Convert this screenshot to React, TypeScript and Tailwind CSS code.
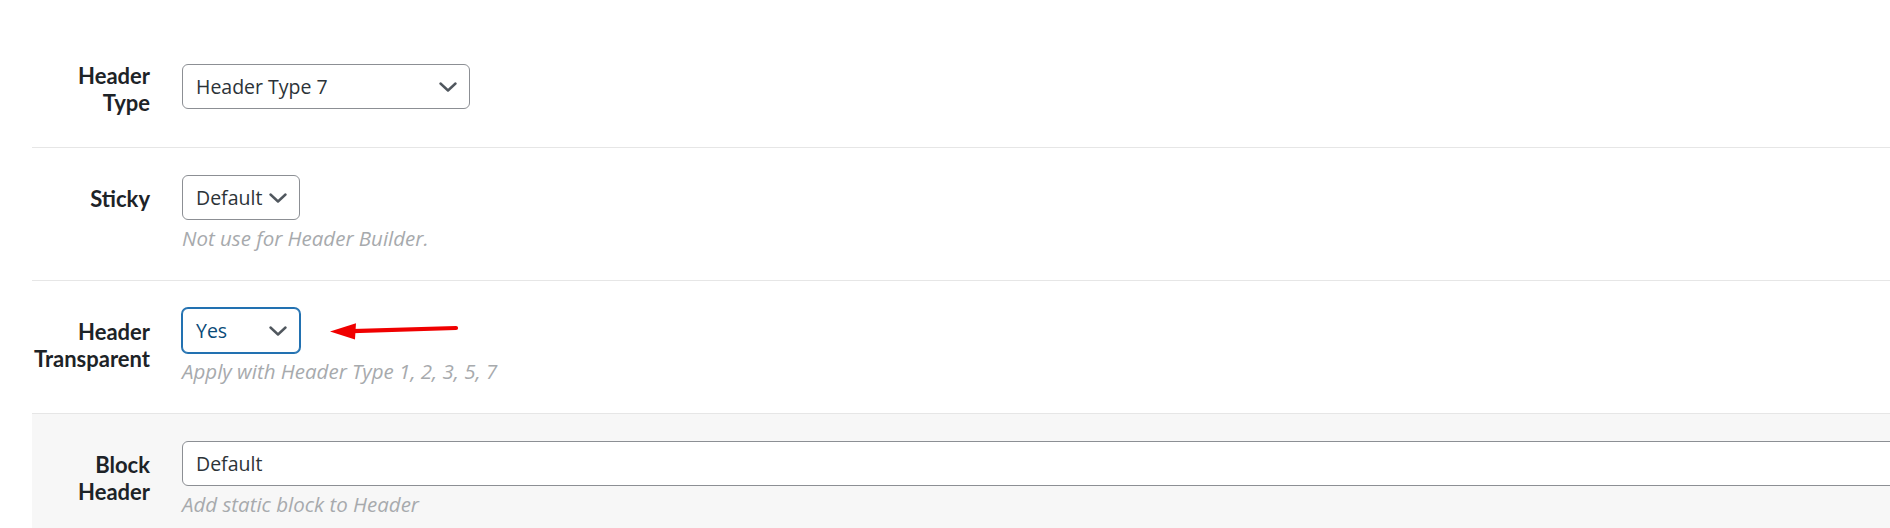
import React from "react";

function Chevron() {
  return (
    <svg width="18" height="10" viewBox="0 0 18 10" fill="none" className="shrink-0">
      <path d="M1.5 1.5 L9 8.5 L16.5 1.5" stroke="#50575e" strokeWidth="2.4" strokeLinecap="round" strokeLinejoin="round" />
    </svg>
  );
}

function Select({
  value,
  width,
  focused,
  chevron = true,
}: {
  value: string;
  width: string;
  focused?: boolean;
  chevron?: boolean;
}) {
  return (
    <div
      className={`${width} h-[45px] flex items-center justify-between rounded-[6px] pl-[13px] pr-[12px] text-[19.5px] bg-white font-['Open_Sans',sans-serif] ${
        focused
          ? "border border-[#2271b1] ring-1 ring-[#2271b1] text-[#0a4b78]"
          : "border border-[#8c8f94] text-[#2c3338]"
      }`}
    >
      <span className="leading-none">{value}</span>
      {chevron && <Chevron />}
    </div>
  );
}

function Desc({ children }: { children: React.ReactNode }) {
  return (
    <div className="mt-[5px] text-[20.5px] leading-[27px] italic text-[#a7aaad] font-['Open_Sans',sans-serif]">
      {children}
    </div>
  );
}

function Label({ children, className = "" }: { children: React.ReactNode; className?: string }) {
  return (
    <div
      className={`w-[118px] shrink-0 text-right font-bold text-[22px] leading-[27px] text-[#1d2327] font-['Lato',sans-serif] ${className}`}
    >
      {children}
    </div>
  );
}

export default function App() {
  return (
    <div className="w-[1890px] h-[528px] overflow-hidden bg-white font-['Lato',sans-serif]">
      <div className="ml-[32px] pt-[36px]">
        {/* Row 1 */}
        <div className="flex h-[112px] border-b border-[#e6e6e6] pt-[28px]">
          <Label className="mt-[-2px]">
            Header
            <br />
            Type
          </Label>
          <div className="ml-[32px]">
            <Select value="Header Type 7" width="w-[288px]" />
          </div>
        </div>

        {/* Row 2 */}
        <div className="flex h-[133px] border-b border-[#e6e6e6] pt-[27px]">
          <Label className="mt-[10px]">Sticky</Label>
          <div className="ml-[32px]">
            <Select value="Default" width="w-[118px]" />
            <Desc>Not use for Header Builder.</Desc>
          </div>
        </div>

        {/* Row 3 */}
        <div className="relative flex h-[133px] border-b border-[#e6e6e6] pt-[27px]">
          <Label className="mt-[10px]">
            Header
            <br />
            Transparent
          </Label>
          <div className="ml-[32px]">
            <Select value="Yes" width="w-[118px]" focused />
            <Desc>Apply with Header Type 1, 2, 3, 5, 7</Desc>
          </div>
          <svg
            className="absolute left-[288px] top-[34px]"
            width="150"
            height="30"
            viewBox="0 0 150 30"
          >
            <path d="M32 16.2 L136 13" stroke="#f00000" strokeWidth="4.2" strokeLinecap="round" />
            <path d="M10 16.5 L36 8.2 L35 24.6 Z" fill="#f00000" />
          </svg>
        </div>

        {/* Row 4 */}
        <div className="flex h-[200px] bg-[#f7f7f7] pt-[27px]">
          <Label className="mt-[10px]">
            Block
            <br />
            Header
          </Label>
          <div className="ml-[32px]">
            <Select value="Default" width="w-[1760px]" chevron={false} />
            <Desc>Add static block to Header</Desc>
          </div>
        </div>
      </div>
    </div>
  );
}
